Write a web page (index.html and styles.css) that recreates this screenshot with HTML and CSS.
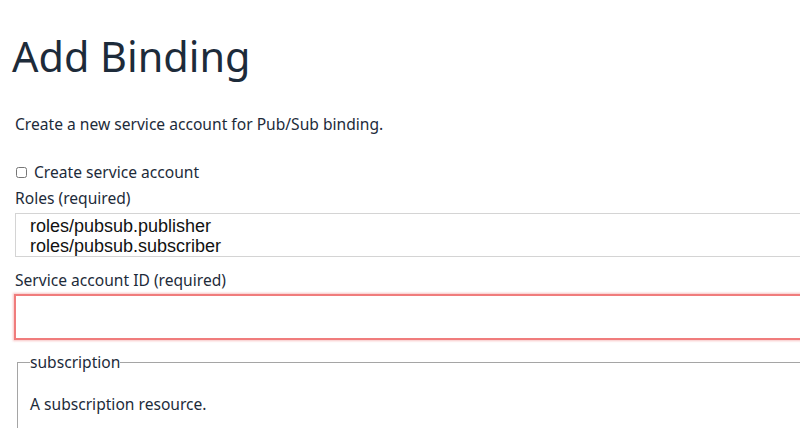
FILE: index.html
```html
<!DOCTYPE html>
<html>
<head>
<meta charset="utf-8">
<link rel="stylesheet" href="styles.css">
</head>
<body>
<div class="page">
  <h1 class="title">Add Binding</h1>
  <p class="intro">Create a new service account for Pub/Sub binding.</p>
  <label class="check-row"><input type="checkbox" class="check"> Create service account</label>
  <div class="field-label">Roles (required)</div>
  <div class="listbox">
    <div class="option">roles/pubsub.publisher</div>
    <div class="option">roles/pubsub.subscriber</div>
  </div>
  <div class="field-label">Service account ID (required)</div>
  <input type="text" class="text-input">
  <fieldset class="group">
    <legend class="group-legend">subscription</legend>
    <p class="group-desc">A subscription resource.</p>
  </fieldset>
</div>
</body>
</html>
```
FILE: styles.css
```css
html, body {
  margin: 0;
  padding: 0;
  overflow: hidden;
  background: #fff;
}
.page {
  width: 1000px;
  padding-left: 15px;
  font-family: "Noto Sans", "Open Sans", sans-serif;
  color: #1d2b3a;
  font-size: 15.6px;
}
.title {
  font-size: 41.4px;
  font-weight: 400;
  margin: 0 0 0 -3px;
  padding-top: 26px;
  line-height: 60px;
}
.intro {
  margin: 27px 0 0 0;
  line-height: 22px;
}
.check-row {
  display: flex;
  align-items: center;
  margin-top: 26px;
  height: 22px;
}
.check {
  margin: 0 7px 0 1px;
  width: 11px;
  height: 11px;
}
.field-label {
  margin-top: 4px;
  line-height: 22px;
}
.listbox {
  margin-top: 4px;
  border: 1px solid #d4d4d4;
  height: 42px;
  box-sizing: content-box;
  overflow: hidden;
  padding-left: 14px;
  font-family: "Liberation Sans", Arial, sans-serif;
  font-size: 18px;
  color: #111;
  line-height: 20px;
}
.option {
  height: 20px;
}
.option:first-child {
  margin-top: 2px;
}
.listbox + .field-label {
  margin-top: 12px;
}
.text-input {
  display: block;
  margin: 3px 0 0 -1px;
  width: 980px;
  height: 46px;
  box-sizing: border-box;
  border: 2px solid #f07c7c;
  box-shadow: 0 0 2px 1px rgba(240, 124, 124, 0.45);
  outline: none;
}
.group {
  margin: 12px 0 0 2px;
  padding: 0 12px;
  border: 1px solid #a5a5a5;
  border-bottom: none;
}
.group-legend {
  padding: 0;
  line-height: 20px;
}
.group-desc {
  margin: 21px 0 20px 0;
}
```
